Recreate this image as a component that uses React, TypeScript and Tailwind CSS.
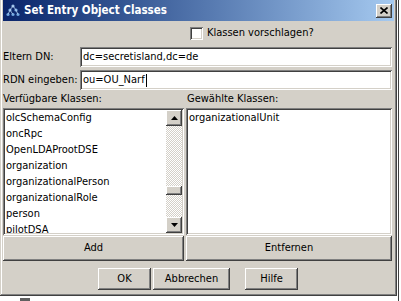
const sunken =
  "shadow-[inset_1px_1px_0_#808080,inset_-1px_-1px_0_#ffffff,inset_2px_2px_0_#404040,inset_-2px_-2px_0_#d4d0c8]"
const raised =
  "shadow-[inset_-1px_-1px_0_#404040,inset_1px_1px_0_#ffffff,inset_-2px_-2px_0_#808080,inset_2px_2px_0_#d4d0c8]"

const available = [
  "olcSchemaConfig",
  "oncRpc",
  "OpenLDAProotDSE",
  "organization",
  "organizationalPerson",
  "organizationalRole",
  "person",
  "pilotDSA",
]

function Arrow({ up }: { up?: boolean }) {
  return (
    <div className={`w-[16px] h-[16px] bg-[#d4d0c8] flex items-center justify-center ${raised}`}>
      <svg width="7" height="4" viewBox="0 0 7 4">
        <path d={up ? "M3.5 0 L7 4 L0 4 Z" : "M0 0 L7 0 L3.5 4 Z"} fill="#000" />
      </svg>
    </div>
  )
}

function Button({ label, className }: { label: string; className: string }) {
  return (
    <div className={`bg-[#d4d0c8] flex items-center justify-center text-black ${raised} ${className}`}>
      {label}
    </div>
  )
}

export default function App() {
  return (
    <div
      className="w-[401px] h-[301px] bg-white relative overflow-hidden text-[11px] text-black"
      style={{ fontFamily: 'Tahoma, "DejaVu Sans Condensed", "Liberation Sans", sans-serif' }}
    >
      {/* bits of the window behind */}
      <div className="absolute left-[398px] top-0 w-[1px] h-[301px] bg-[#404040]" />
      <div className="absolute left-[20px] top-[298px] w-[10px] h-[3px] bg-[#606060]" />

      <div className="w-[397px] h-[296px] bg-[#d4d0c8] flex flex-col px-[3px] shadow-[inset_-1px_-1px_0_#404040,inset_1px_0_0_#d4d0c8,inset_-2px_-2px_0_#808080,inset_2px_0_0_#ffffff]">
        {/* title bar */}
        <div className="h-[21px] flex items-center bg-gradient-to-r from-[#0a246a] to-[#a6caf0] pl-[2px] pr-[2px]">
          <svg width="16" height="16" viewBox="0 0 16 16" className="mr-[3px]">
            <circle cx="8" cy="3" r="1.6" fill="#9ec3ea" />
            <circle cx="5" cy="7" r="1.6" fill="#7fb0e6" />
            <circle cx="11" cy="7" r="1.6" fill="#7fb0e6" />
            <circle cx="3" cy="11.5" r="1.6" fill="#6aa0dc" />
            <circle cx="8" cy="11.5" r="1.6" fill="#6aa0dc" />
            <circle cx="13" cy="11.5" r="1.6" fill="#6aa0dc" />
            <path d="M8 3 L5 7 L3 11.5 M5 7 L8 11.5 M8 3 L11 7 L13 11.5" stroke="#b8d4f2" strokeWidth="0.8" fill="none" />
          </svg>
          <span className="font-bold text-white text-[11.5px]">Set Entry Object Classes</span>
          <div className={`ml-auto w-[16px] h-[14px] bg-[#d4d0c8] flex items-center justify-center ${raised}`}>
            <svg width="8" height="7" viewBox="0 0 8 7">
              <path d="M0.5 0.5 L7.5 6.5 M7.5 0.5 L0.5 6.5" stroke="#000" strokeWidth="1.6" />
            </svg>
          </div>
        </div>

        {/* suggest checkbox */}
        <div className="h-[24px] flex items-center pl-[187px]">
          <div className={`w-[13px] h-[13px] bg-white ${sunken}`} />
          <span className="ml-[4px]">Klassen vorschlagen?</span>
        </div>

        {/* parent DN */}
        <div className="mt-[2px] h-[20px] flex items-center">
          <span className="w-[77px]">Eltern DN:</span>
          <div className={`w-[312px] h-[20px] bg-white flex items-center pl-[3px] ${sunken}`}>
            dc=secretisland,dc=de
          </div>
        </div>

        {/* RDN */}
        <div className="mt-[3px] h-[20px] flex items-center">
          <span className="w-[77px]">RDN eingeben:</span>
          <div className={`w-[312px] h-[20px] bg-white flex items-center pl-[3px] ${sunken}`}>
            ou=OU_Narf
            <span className="ml-[1px] w-[1px] h-[13px] bg-black" />
          </div>
        </div>

        {/* list labels */}
        <div className="h-[18px] flex items-center">
          <span className="w-[183px]">Verfügbare Klassen:</span>
          <span className="ml-[1px]">Gewählte Klassen:</span>
        </div>

        {/* lists */}
        <div className="h-[127px] flex gap-[2px]">
          <div className={`w-[181px] h-full bg-white flex p-[2px] ${sunken}`}>
            <div className="flex-1 overflow-hidden pl-[1px]">
              {available.map((c) => (
                <div key={c} className="h-[16px] leading-[16px] whitespace-nowrap">
                  {c}
                </div>
              ))}
            </div>
            <div className="w-[16px] h-full flex flex-col bg-[repeating-conic-gradient(#d4d0c8_0_25%,#ffffff_0_50%)] bg-[length:2px_2px]">
              <Arrow up />
              <div className="flex-1 relative">
                <div className={`absolute left-0 top-[60px] w-[16px] h-[9px] bg-[#d4d0c8] ${raised}`} />
              </div>
              <Arrow />
            </div>
          </div>
          <div className={`w-[206px] h-full bg-white p-[2px] ${sunken}`}>
            <div className="pl-[1px] h-[16px] leading-[16px]">organizationalUnit</div>
          </div>
        </div>

        {/* add / remove */}
        <div className="mt-[1px] h-[25px] flex gap-[2px]">
          <Button label="Add" className="w-[181px] h-full" />
          <Button label="Entfernen" className="w-[206px] h-full" />
        </div>

        {/* dialog buttons */}
        <div className="mt-[7px] h-[22px] flex pl-[95px]">
          <Button label="OK" className="w-[53px] h-full" />
          <Button label="Abbrechen" className="ml-[2px] w-[77px] h-full" />
          <Button label="Hilfe" className="ml-[15px] w-[53px] h-full" />
        </div>
      </div>
    </div>
  )
}
